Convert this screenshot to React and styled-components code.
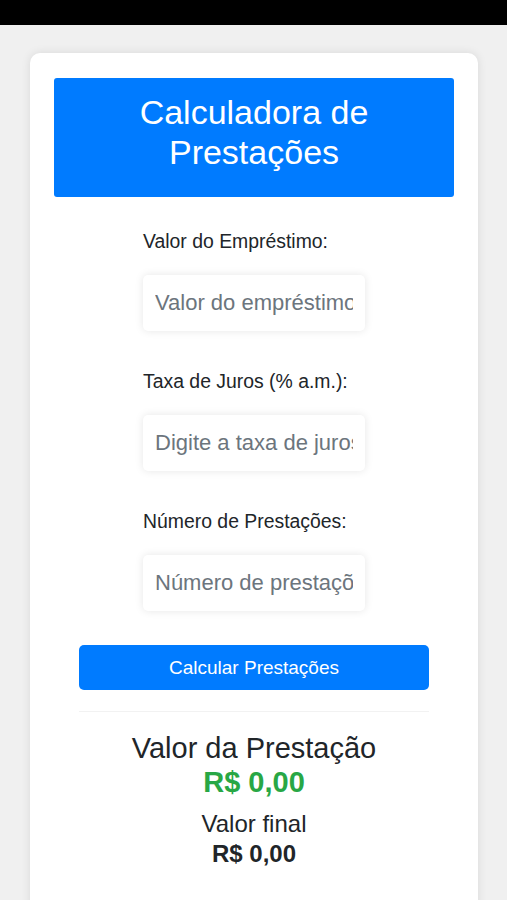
import React, { useState } from 'react';
import styled, { createGlobalStyle } from 'styled-components';

const GlobalStyle = createGlobalStyle`
  html, body {
    margin: 0;
    padding: 0;
    background: #f0f0f0;
    font-family: "Liberation Sans", Arial, sans-serif;
    color: #212529;
  }
  * { box-sizing: border-box; }
`;

const StatusBar = styled.div`
  height: 25px;
  background: #000;
`;

const Page = styled.div`
  padding: 28px 29px 0 30px;
  height: 875px;
  overflow: hidden;
`;

const Card = styled.div`
  background: #fff;
  border-radius: 10px;
  box-shadow: 0 0 10px rgba(0, 0, 0, 0.1);
  padding: 25px 24px 60px;
  min-height: 900px;
  display: flex;
  flex-direction: column;
  align-items: center;
`;

const Header = styled.h1`
  align-self: stretch;
  margin: 0;
  background: #007bff;
  color: #fff;
  border-radius: 3px;
  font-weight: 400;
  font-size: 34px;
  line-height: 40px;
  text-align: center;
  padding: 14px 20px 25px;
`;

const Form = styled.div`
  width: 222px;
  margin-top: 33px;
  display: flex;
  flex-direction: column;
`;

const Group = styled.div`
  display: flex;
  flex-direction: column;
  margin-bottom: 39px;
  &:last-child { margin-bottom: 0; }
`;

const Label = styled.label`
  font-size: 19.4px;
  line-height: 22px;
  margin-bottom: 23px;
  color: #212529;
`;

const Input = styled.input`
  height: 56px;
  width: 222px;
  border: none;
  border-radius: 5px;
  box-shadow: 0 0 8px rgba(0, 0, 0, 0.1);
  padding: 0 12px;
  font-family: inherit;
  font-size: 22px;
  color: #495057;
  outline: none;
  &::placeholder { color: #6c757d; }
`;

const Button = styled.button`
  width: 350px;
  height: 45px;
  margin-top: 34px;
  border: none;
  border-radius: 5px;
  background: #007bff;
  color: #fff;
  font-family: inherit;
  font-size: 19px;
  cursor: pointer;
`;

const Divider = styled.hr`
  width: 350px;
  margin: 21px 0 0;
  border: none;
  border-top: 1px solid #f2f2f2;
`;

const Result = styled.div`
  margin-top: 19px;
  text-align: center;
  display: flex;
  flex-direction: column;
  align-items: center;
`;

const ResultTitle = styled.div`
  font-size: ${p => p.size}px;
  line-height: ${p => p.lh}px;
  color: #212529;
  margin-top: ${p => p.gap || 0}px;
`;

const Amount = styled.div`
  font-size: ${p => p.size}px;
  line-height: ${p => p.lh}px;
  font-weight: 700;
  color: ${p => p.green ? '#28a745' : '#212529'};
`;

export default function App() {
  const [valor, setValor] = useState('');
  const [taxa, setTaxa] = useState('');
  const [num, setNum] = useState('');

  return (
    <>
      <GlobalStyle />
      <StatusBar />
      <Page>
        <Card>
          <Header>Calculadora de Prestações</Header>
          <Form>
            <Group>
              <Label>Valor do Empréstimo:</Label>
              <Input value={valor} onChange={e => setValor(e.target.value)} placeholder="Valor do empréstimo" />
            </Group>
            <Group>
              <Label>Taxa de Juros (% a.m.):</Label>
              <Input value={taxa} onChange={e => setTaxa(e.target.value)} placeholder="Digite a taxa de juros" />
            </Group>
            <Group>
              <Label>Número de Prestações:</Label>
              <Input value={num} onChange={e => setNum(e.target.value)} placeholder="Número de prestações" />
            </Group>
          </Form>
          <Button>Calcular Prestações</Button>
          <Divider />
          <Result>
            <ResultTitle size={29} lh={34}>Valor da Prestação</ResultTitle>
            <Amount size={29} lh={34} green>R$ 0,00</Amount>
            <ResultTitle size={24} lh={30} gap={10}>Valor final</ResultTitle>
            <Amount size={24} lh={30}>R$ 0,00</Amount>
          </Result>
        </Card>
      </Page>
    </>
  );
}
